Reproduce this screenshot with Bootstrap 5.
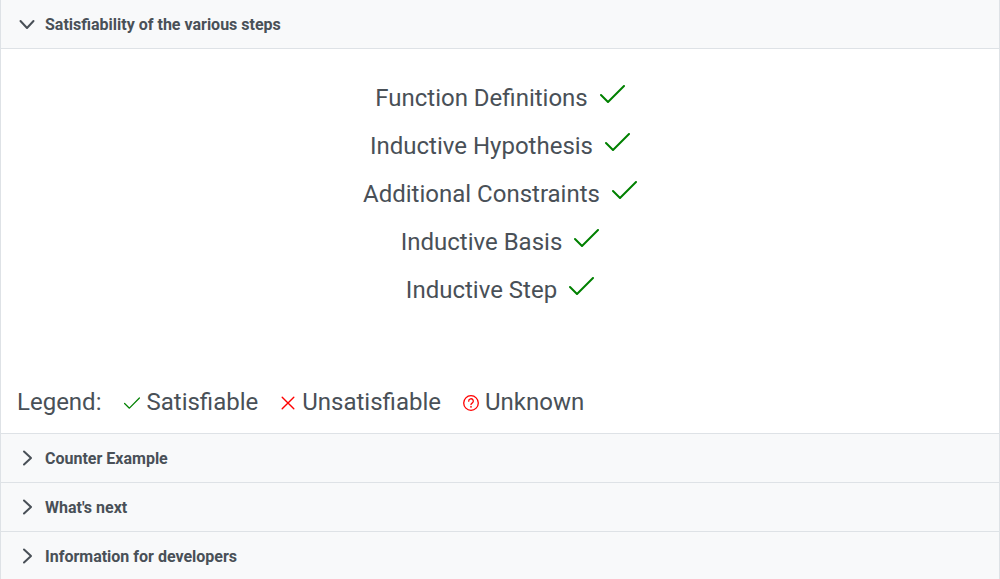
<!DOCTYPE html>
<html lang="en">
<head>
<meta charset="utf-8">
<meta name="viewport" content="width=device-width, initial-scale=1">
<title>Satisfiability of the various steps</title>
<link href="https://cdn.jsdelivr.net/npm/bootstrap@5.3.0/dist/css/bootstrap.min.css" rel="stylesheet">
<style>
  body { font-family: Roboto, sans-serif; color: #495057; overflow-x: hidden; }
  .accordion {
    --bs-accordion-color: #495057;
    --bs-accordion-btn-color: #495057;
    --bs-accordion-active-color: #495057;
    --bs-accordion-btn-bg: #f8f9fa;
    --bs-accordion-active-bg: #f8f9fa;
    --bs-accordion-border-color: #dee2e6;
    --bs-accordion-border-radius: 0;
    --bs-accordion-inner-border-radius: 0;
    --bs-accordion-btn-padding-x: 18px;
  }
  .accordion-item:first-of-type { border-top: 0; }
  .accordion-button { gap: 10px; padding-top: 13px; padding-bottom: 11px; font-weight: 700; line-height: 24px; }
  .accordion-button:not(.collapsed) { box-shadow: 0 1px 0 #dee2e6; }
  .accordion-button::after { display: none; }
  .chevron { margin-bottom: 2px; transform: rotate(90deg); transition: transform .2s; }
  .collapsed .chevron { transform: none; }
  .panel-text { font-size: 24px; line-height: 32px; }
  .steps { padding-top: 26px; margin-bottom: 72px; line-height: 48px; }
  .steps svg { vertical-align: 3px; margin-left: 12px; }
  .legend-row { column-gap: 22px; }
  .legend-row, .accordion-body { padding-bottom: 15px; }
  .legend-item { display: flex; align-items: center; gap: 6px; }
  .legend-item svg { margin-top: 2px; }
  .legend-title { padding-right: 1px; }
  svg { fill: none; stroke-linecap: round; stroke-linejoin: round; }
  .sat { stroke: green; }
  .unsat { stroke: red; }
</style>
</head>
<body>
<svg class="d-none" aria-hidden="true">
  <symbol id="chevron" viewBox="0 0 16 16"><path d="M5 1.5 12 8 5 14.5"/></symbol>
</svg>
<main class="accordion" id="results">
  <section class="accordion-item">
    <h2 class="accordion-header">
      <button class="accordion-button" type="button" data-bs-toggle="collapse" data-bs-target="#steps" aria-expanded="true" aria-controls="steps">
        <svg class="chevron" width="16" height="16" stroke="#495057" stroke-width="2"><use href="#chevron"/></svg>
        Satisfiability of the various steps
      </button>
    </h2>
    <div id="steps" class="accordion-collapse collapse show">
      <div class="accordion-body panel-text px-3 pt-0">
        <ul class="steps list-unstyled text-center">
          <li>Function Definitions<svg class="sat" width="25" height="18" stroke-width="2"><path d="M1 10 8 17 24 1"/></svg></li>
          <li>Inductive Hypothesis<svg class="sat" width="25" height="18" stroke-width="2"><path d="M1 10 8 17 24 1"/></svg></li>
          <li>Additional Constraints<svg class="sat" width="25" height="18" stroke-width="2"><path d="M1 10 8 17 24 1"/></svg></li>
          <li>Inductive Basis<svg class="sat" width="25" height="18" stroke-width="2"><path d="M1 10 8 17 24 1"/></svg></li>
          <li>Inductive Step<svg class="sat" width="25" height="18" stroke-width="2"><path d="M1 10 8 17 24 1"/></svg></li>
        </ul>
        <div class="legend-row d-flex flex-wrap pb-0">
          <span class="legend-title">Legend:</span>
          <span class="legend-item"><svg class="sat" width="16" height="16" stroke-width="1.2"><path d="M.6 8.5 5.4 13.2 15.4 3"/></svg>Satisfiable</span>
          <span class="legend-item"><svg class="unsat" width="16" height="16" stroke-width="1.4"><path d="m2.2 2.2 11.6 11.6M13.8 2.2 2.2 13.8"/></svg>Unsatisfiable</span>
          <span class="legend-item"><svg class="unsat" width="16" height="16" stroke-width="1.3"><circle cx="8" cy="8" r="7.3"/><path d="M5.7 6.2a2.3 2.3 0 1 1 3.4 1.9Q8 8.7 8 9.5"/><circle cx="8" cy="11.8" r=".9" fill="red" stroke="none"/></svg>Unknown</span>
        </div>
      </div>
    </div>
  </section>
  <section class="accordion-item">
    <h2 class="accordion-header">
      <button class="accordion-button collapsed" type="button" data-bs-toggle="collapse" data-bs-target="#counter" aria-expanded="false" aria-controls="counter">
        <svg class="chevron" width="16" height="16" stroke="#495057" stroke-width="2"><use href="#chevron"/></svg>
        Counter Example
      </button>
    </h2>
    <div id="counter" class="accordion-collapse collapse"></div>
  </section>
  <section class="accordion-item">
    <h2 class="accordion-header">
      <button class="accordion-button collapsed" type="button" data-bs-toggle="collapse" data-bs-target="#next" aria-expanded="false" aria-controls="next">
        <svg class="chevron" width="16" height="16" stroke="#495057" stroke-width="2"><use href="#chevron"/></svg>
        What's next
      </button>
    </h2>
    <div id="next" class="accordion-collapse collapse"></div>
  </section>
  <section class="accordion-item border-bottom-0">
    <h2 class="accordion-header">
      <button class="accordion-button collapsed" type="button" data-bs-toggle="collapse" data-bs-target="#dev" aria-expanded="false" aria-controls="dev">
        <svg class="chevron" width="16" height="16" stroke="#495057" stroke-width="2"><use href="#chevron"/></svg>
        Information for developers
      </button>
    </h2>
    <div id="dev" class="accordion-collapse collapse"></div>
  </section>
</main>
<script src="https://cdn.jsdelivr.net/npm/bootstrap@5.3.0/dist/js/bootstrap.bundle.min.js"></script>
</body>
</html>
